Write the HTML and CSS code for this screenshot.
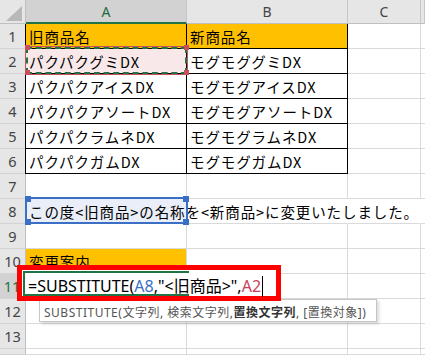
FILE: index.html
```html
<!DOCTYPE html>
<html lang="ja">

<head>
    <meta charset="UTF-8">
    <title>SUBSTITUTE</title>
    <link rel="stylesheet" href="styles.css">
</head>

<body>
    <div class="sheet">
        <div class="row head">
            <div class="corner"></div>
            <div class="col sel">A</div>
            <div class="col">B</div>
            <div class="col">C</div>
            <div class="col"></div>
        </div>

        <div class="row">
            <div class="num">1</div>
            <div class="cell t first hd">旧商品名</div>
            <div class="cell t hd">新商品名</div>
            <div class="cell"></div>
            <div class="cell"></div>
        </div>
        <div class="row">
            <div class="num">2</div>
            <div class="cell t first copy">パクパクグミDX</div>
            <div class="cell t">モグモググミDX</div>
            <div class="cell"></div>
            <div class="cell"></div>
        </div>
        <div class="row">
            <div class="num">3</div>
            <div class="cell t first">パクパクアイスDX</div>
            <div class="cell t">モグモグアイスDX</div>
            <div class="cell"></div>
            <div class="cell"></div>
        </div>
        <div class="row">
            <div class="num">4</div>
            <div class="cell t first">パクパクアソートDX</div>
            <div class="cell t">モグモグアソートDX</div>
            <div class="cell"></div>
            <div class="cell"></div>
        </div>
        <div class="row">
            <div class="num">5</div>
            <div class="cell t first">パクパクラムネDX</div>
            <div class="cell t">モグモグラムネDX</div>
            <div class="cell"></div>
            <div class="cell"></div>
        </div>
        <div class="row">
            <div class="num">6</div>
            <div class="cell t first">パクパクガムDX</div>
            <div class="cell t">モグモグガムDX</div>
            <div class="cell"></div>
            <div class="cell"></div>
        </div>
        <div class="row">
            <div class="num">7</div>
            <div class="cell"></div>
            <div class="cell"></div>
            <div class="cell"></div>
            <div class="cell"></div>
        </div>
        <div class="row">
            <div class="num">8</div>
            <div class="cell ref">この度&lt;旧商品&gt;の名称を&lt;新商品&gt;に変更いたしました。</div>
            <div class="cell spill"></div>
            <div class="cell spill"></div>
            <div class="cell"></div>
        </div>
        <div class="row">
            <div class="num">9</div>
            <div class="cell"></div>
            <div class="cell"></div>
            <div class="cell"></div>
            <div class="cell"></div>
        </div>
        <div class="row">
            <div class="num">10</div>
            <div class="cell hd">変更案内</div>
            <div class="cell"></div>
            <div class="cell"></div>
            <div class="cell"></div>
        </div>
        <div class="row">
            <div class="num sel">11</div>
            <div class="cell"></div>
            <div class="cell"></div>
            <div class="cell"></div>
            <div class="cell"></div>
        </div>
        <div class="row">
            <div class="num">12</div>
            <div class="cell"></div>
            <div class="cell"></div>
            <div class="cell"></div>
            <div class="cell"></div>
        </div>
        <div class="row">
            <div class="num">13</div>
            <div class="cell"></div>
            <div class="cell"></div>
            <div class="cell"></div>
            <div class="cell"></div>
        </div>
        <div class="row last">
            <div class="num"></div>
            <div class="cell"></div>
            <div class="cell"></div>
            <div class="cell"></div>
            <div class="cell"></div>
        </div>

        <!-- range finder on A2 -->
        <div class="mark mark-a2">
            <span class="h tl"></span><span class="h tr"></span>
            <span class="h bl"></span><span class="h br"></span>
        </div>

        <!-- range finder on A8 -->
        <div class="mark mark-a8">
            <span class="h tl"></span><span class="h tr"></span>
            <span class="h bl"></span><span class="h br"></span>
        </div>

        <div class="tip">SUBSTITUTE(文字列, 検索文字列, <b>置換文字列</b>, [置換対象])</div>

        <div class="editor">
            <div class="active"></div>
            <span class="formula">=SUBSTITUTE(<span class="r1">A8</span>,"&lt;旧商品&gt;",<span class="r2">A2</span><span class="caret"></span></span>
        </div>
    </div>
</body>

</html>
```

FILE: styles.css
```css
* {
    margin: 0;
    padding: 0;
    box-sizing: border-box;
}

body {
    width: 425px;
    height: 355px;
    overflow: hidden;
    background: #fff;
    font-family: "Noto Sans CJK JP", sans-serif;
}

.sheet {
    position: relative;
}

.row {
    display: grid;
    grid-template-columns: 26px 161px 161px 73px 4px;
    height: 25px;
}

.row.head {
    height: 24px;
}

.row.last {
    height: 6px;
}

/* headers */
.corner {
    position: relative;
    background: #e6e6e6;
    border-right: 1px solid #bfbfbf;
    border-bottom: 1px solid #bfbfbf;
}

.corner::after {
    content: "";
    position: absolute;
    right: 3px;
    bottom: 2px;
    width: 16px;
    height: 15px;
    background: #b8b8b8;
    clip-path: polygon(100% 0, 100% 100%, 0 100%);
}

.col {
    display: flex;
    align-items: center;
    justify-content: center;
    background: #e6e6e6;
    border-right: 1px solid #c6c6c6;
    border-bottom: 1px solid #bfbfbf;
    font-family: "Noto Sans", sans-serif;
    font-size: 14px;
    color: #444;
}

.col.sel {
    background: #d2d2d2;
    color: #1e6b41;
    border-bottom: 2px solid #217346;
}

.num {
    display: flex;
    align-items: center;
    justify-content: center;
    background: #e6e6e6;
    border-right: 1px solid #bfbfbf;
    border-bottom: 1px solid #d2d2d2;
    font-family: "Noto Sans", sans-serif;
    font-size: 14.5px;
    color: #444;
}

.num.sel {
    background: #d2d2d2;
    color: #217346;
    border-right: 2px solid #217346;
}

/* cells */
.cell {
    display: flex;
    align-items: center;
    padding: 1px 3px 0;
    border-right: 1px solid #dadada;
    border-bottom: 1px solid #dadada;
    font-size: 14.5px;
    letter-spacing: 0.9px;
    color: #000;
    white-space: nowrap;
}

.cell.t {
    border-color: #000;
}

.cell.first {
    box-shadow: -1px 0 0 #000;
}

.cell.hd {
    background: #ffc000;
}

.cell.copy {
    background: #f8e8e9;
}

.cell.ref {
    background: #e9eef8;
    overflow: visible;
}

.cell.spill {
    border-right-color: transparent;
}

/* range finders */
.mark {
    position: absolute;
}

.mark-a2 {
    left: 25px;
    top: 46px;
    width: 163px;
    height: 29px;
    border: 1px solid #c8505c;
}

.mark-a2::before {
    content: "";
    position: absolute;
    inset: 0;
    border: 2px dashed #217346;
}

.mark-a8 {
    left: 25px;
    top: 197px;
    width: 163px;
    height: 27px;
    border: 2px solid #3b6fc6;
}

.h {
    position: absolute;
    width: 5px;
    height: 5px;
    background: #c8505c;
}

.mark-a8 .h {
    width: 6px;
    height: 6px;
    background: #3b6fc6;
}

.mark-a2 .tl { left: -1px; top: -2px; }
.mark-a2 .tr { right: -2px; top: -2px; }
.mark-a2 .bl { left: -1px; bottom: -1px; }
.mark-a2 .br { right: -2px; bottom: -1px; }

.mark-a8 .tl { left: -2px; top: -3px; }
.mark-a8 .tr { right: -3px; top: -3px; }
.mark-a8 .bl { left: -2px; bottom: -3px; }
.mark-a8 .br { right: -3px; bottom: -3px; }

/* function tooltip */
.tip {
    position: absolute;
    left: 39px;
    top: 299px;
    width: 338px;
    height: 23px;
    display: flex;
    align-items: center;
    padding: 2px 4px 0;
    background: #fff;
    border: 1px solid #c6c6c6;
    box-shadow: 2px 2px 3px rgba(0, 0, 0, 0.15);
    font-family: "Noto Sans", "Noto Sans CJK JP", sans-serif;
    font-size: 12px;
    letter-spacing: 0.5px;
    color: #555;
    white-space: nowrap;
}

.tip b {
    color: #333;
}

/* in-cell editor with the red callout */
.editor {
    position: absolute;
    left: 17px;
    top: 265px;
    width: 264px;
    height: 36px;
    display: flex;
    align-items: center;
    padding: 4px 0 0 6px;
    background: #fff;
    border: 5px solid #f00;
}

.active {
    position: absolute;
    left: 1px;
    top: 1px;
    width: 166px;
    height: 25px;
    border: 2px solid #217346;
    border-right: none;
}

.formula {
    position: relative;
    font-family: "Noto Sans", "Noto Sans CJK JP", sans-serif;
    font-size: 16px;
    color: #000;
    white-space: nowrap;
}

.r1 {
    color: #3b6fc6;
}

.r2 {
    color: #c8405a;
}

.caret {
    display: inline-block;
    width: 1px;
    height: 21px;
    margin-left: 1px;
    vertical-align: -5px;
    background: #000;
}
```
